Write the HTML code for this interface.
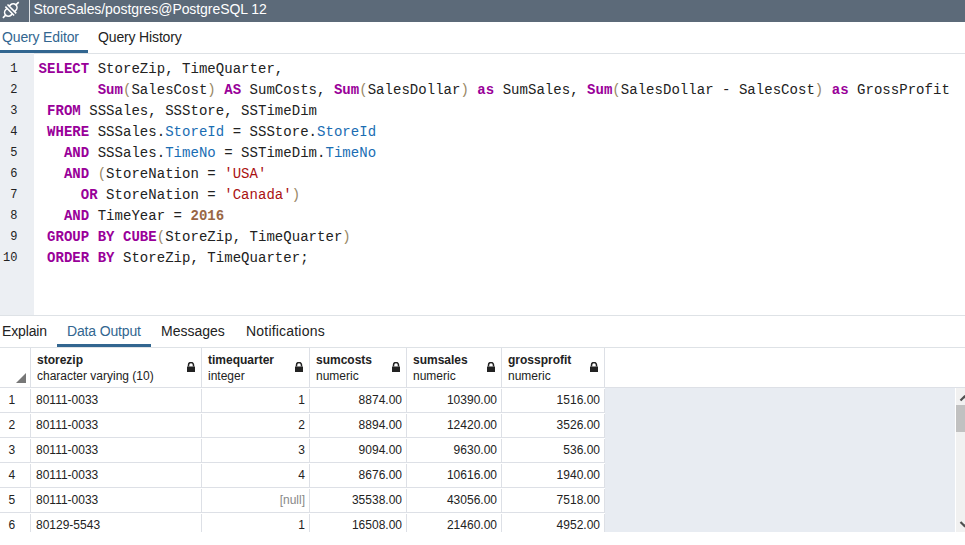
<!DOCTYPE html>
<html><head><meta charset="utf-8">
<style>
*{box-sizing:border-box;margin:0;padding:0}
html,body{width:965px;height:545px;overflow:hidden;background:#fff;font-family:"Liberation Sans",sans-serif;position:relative}
.abs{position:absolute}
#hdr{left:0;top:0;width:965px;height:22px;background:#5c6a79}
#hdr .sep{left:29px;top:0;width:1px;height:22px;background:#dde1e5}
#hdr .title{left:33.5px;top:-1px;height:22px;line-height:21px;font-size:14px;color:#fff;white-space:nowrap;letter-spacing:-0.07px}
.tab{position:absolute;font-size:14px;white-space:nowrap;color:#222;letter-spacing:-0.15px}
.tab.act{color:#326690}
.uline{position:absolute;background:#326690;height:3px}
.hline{position:absolute;height:1px;background:#dee2e6;left:0;width:965px}
#gutter{left:0;top:53px;width:34px;height:262px;background:#eceff3}
.ln{position:absolute;left:0;width:17.5px;text-align:right;font-family:"Liberation Mono",monospace;font-size:12px;color:#222}
.code{position:absolute;left:38.6px;letter-spacing:0.036px;font-family:"Liberation Mono",monospace;font-size:14px;color:#222;white-space:pre}
.k{color:#990099;font-weight:bold}
.p{color:#1a6db3}
.b{color:#998866}
.s{color:#aa1111}
.n{color:#996644;font-weight:bold}
.gh{position:absolute;font-size:12px;white-space:nowrap;color:#222}
.gh b{display:block;font-weight:bold;line-height:16px}
.gh{line-height:16px}
.vl{position:absolute;width:1px;background:#dde0e6}
.cell{position:absolute;font-size:12px;color:#222;white-space:nowrap}
</style></head><body>
<div id="hdr" class="abs">
  <svg class="abs" style="left:0;top:0" width="22" height="22" viewBox="0 0 22 22"><g transform="rotate(45 10.8 10)" stroke="#fff" stroke-width="1.6" fill="none" stroke-linecap="butt"><path d="M7 8.3 V6.6 A3.8 3.8 0 0 1 14.6 6.6 V8.3"/><path d="M7 11.7 V13.4 A3.8 3.8 0 0 0 14.6 13.4 V11.7"/><path d="M4.6 8.5 H17 M4.6 11.5 H17"/><path d="M10.8 2.8 V-1.2 M10.8 17.2 V21.2"/></g></svg>
  <div class="abs sep"></div>
  <div class="abs title">StoreSales/postgres@PostgreSQL 12</div>
</div>

<div class="tab act" style="left:2px;top:29px">Query Editor</div>
<div class="tab" style="left:98px;top:29px">Query History</div>
<div class="uline" style="left:0;top:50px;width:88px"></div>
<div class="hline" style="top:53px;"></div>

<div id="gutter" class="abs"></div>
<div class="ln" style="top:62px">1</div>
<div class="ln" style="top:83px">2</div>
<div class="ln" style="top:104px">3</div>
<div class="ln" style="top:125px">4</div>
<div class="ln" style="top:146px">5</div>
<div class="ln" style="top:167px">6</div>
<div class="ln" style="top:188px">7</div>
<div class="ln" style="top:209px">8</div>
<div class="ln" style="top:230px">9</div>
<div class="ln" style="top:251px">10</div>

<div class="code" style="top:61px"><span class="k">SELECT</span> StoreZip, TimeQuarter,</div>
<div class="code" style="top:82px">       <span class="k">Sum</span><span class="b">(</span>SalesCost<span class="b">)</span> <span class="k">AS</span> SumCosts, <span class="k">Sum</span><span class="b">(</span>SalesDollar<span class="b">)</span> <span class="k">as</span> SumSales, <span class="k">Sum</span><span class="b">(</span>SalesDollar - SalesCost<span class="b">)</span> <span class="k">as</span> GrossProfit</div>
<div class="code" style="top:103px"> <span class="k">FROM</span> SSSales, SSStore, SSTimeDim</div>
<div class="code" style="top:124px"> <span class="k">WHERE</span> SSSales.<span class="p">StoreId</span> = SSStore.<span class="p">StoreId</span></div>
<div class="code" style="top:145px">   <span class="k">AND</span> SSSales.<span class="p">TimeNo</span> = SSTimeDim.<span class="p">TimeNo</span></div>
<div class="code" style="top:166px">   <span class="k">AND</span> <span class="b">(</span>StoreNation = <span class="s">'USA'</span></div>
<div class="code" style="top:187px">     <span class="k">OR</span> StoreNation = <span class="s">'Canada'</span><span class="b">)</span></div>
<div class="code" style="top:208px">   <span class="k">AND</span> TimeYear = <span class="n">2016</span></div>
<div class="code" style="top:229px"> <span class="k">GROUP</span> <span class="k">BY</span> <span class="k">CUBE</span><span class="b">(</span>StoreZip, TimeQuarter<span class="b">)</span></div>
<div class="code" style="top:250px"> <span class="k">ORDER</span> <span class="k">BY</span> StoreZip, TimeQuarter;</div>

<div class="hline" style="top:315px;"></div>
<div class="tab" style="left:2px;top:323px">Explain</div>
<div class="tab act" style="left:67px;top:323px">Data Output</div>
<div class="tab" style="left:161px;top:323px;letter-spacing:0">Messages</div>
<div class="tab" style="left:246px;top:323px;letter-spacing:0.2px">Notifications</div>
<div class="uline" style="left:57px;top:344px;width:94px"></div>
<div class="hline" style="top:347px;"></div>

<div id="grid">
<div class="abs" style="left:0;top:348px;width:965px;height:184px;overflow:hidden">
<div class="abs" style="left:605px;top:40px;width:350px;height:144px;background:#e8ecf2"></div>
<div class="abs" style="left:956px;top:40px;width:9px;height:144px;background:#f1f1f1"></div><div class="abs" style="left:956px;top:57px;width:9px;height:27px;background:#c1c1c1"></div><svg class="abs" style="left:956px;top:40px" width="9" height="144"><path d="M4.5 12.5 L8.5 8.5 L12.5 12.5" stroke="#505050" stroke-width="2.2" fill="none"/><path d="M4.5 134 L8.5 138 L12.5 134" stroke="#505050" stroke-width="2.2" fill="none"/></svg>
<div class="abs" style="left:0;top:39px;width:965px;height:1px;background:#dde0e6"></div>
<svg class="abs" style="left:16px;top:25px" width="10" height="10"><path d="M10 0 L10 10 L0 10 Z" fill="#777"/></svg>
<div class="vl" style="left:30px;top:0;height:39px"></div>
<div class="gh" style="left:37px;top:4px"><b>storezip</b>character varying (10)</div>
<svg class="abs" style="left:187px;top:14px" width="8" height="10" viewBox="0 0 8 10"><path d="M1.5 4.5 V3 A2.5 2.5 0 0 1 6.5 3 V4.5" stroke="#222" stroke-width="1.5" fill="none"/><rect x="0" y="4.5" width="8" height="5.5" fill="#222"/></svg>
<div class="vl" style="left:201px;top:0;height:39px"></div>
<div class="gh" style="left:208px;top:4px"><b>timequarter</b>integer</div>
<svg class="abs" style="left:295px;top:14px" width="8" height="10" viewBox="0 0 8 10"><path d="M1.5 4.5 V3 A2.5 2.5 0 0 1 6.5 3 V4.5" stroke="#222" stroke-width="1.5" fill="none"/><rect x="0" y="4.5" width="8" height="5.5" fill="#222"/></svg>
<div class="vl" style="left:309px;top:0;height:39px"></div>
<div class="gh" style="left:316px;top:4px"><b>sumcosts</b>numeric</div>
<svg class="abs" style="left:392px;top:14px" width="8" height="10" viewBox="0 0 8 10"><path d="M1.5 4.5 V3 A2.5 2.5 0 0 1 6.5 3 V4.5" stroke="#222" stroke-width="1.5" fill="none"/><rect x="0" y="4.5" width="8" height="5.5" fill="#222"/></svg>
<div class="vl" style="left:406px;top:0;height:39px"></div>
<div class="gh" style="left:413px;top:4px"><b>sumsales</b>numeric</div>
<svg class="abs" style="left:487px;top:14px" width="8" height="10" viewBox="0 0 8 10"><path d="M1.5 4.5 V3 A2.5 2.5 0 0 1 6.5 3 V4.5" stroke="#222" stroke-width="1.5" fill="none"/><rect x="0" y="4.5" width="8" height="5.5" fill="#222"/></svg>
<div class="vl" style="left:501px;top:0;height:39px"></div>
<div class="gh" style="left:508px;top:4px"><b>grossprofit</b>numeric</div>
<svg class="abs" style="left:590px;top:14px" width="8" height="10" viewBox="0 0 8 10"><path d="M1.5 4.5 V3 A2.5 2.5 0 0 1 6.5 3 V4.5" stroke="#222" stroke-width="1.5" fill="none"/><rect x="0" y="4.5" width="8" height="5.5" fill="#222"/></svg>
<div class="vl" style="left:604px;top:0;height:39px"></div>
<div class="abs" style="left:0;top:64px;width:605px;height:1px;background:#dde0e6"></div>
<div class="cell" style="left:8.5px;top:45px">1</div>
<div class="cell" style="left:36px;top:45px">80111-0033</div>
<div class="cell" style="right:660px;top:45px;">1</div>
<div class="cell" style="right:563px;top:45px;">8874.00</div>
<div class="cell" style="right:468px;top:45px;">10390.00</div>
<div class="cell" style="right:365px;top:45px;">1516.00</div>
<div class="abs" style="left:0;top:89px;width:605px;height:1px;background:#dde0e6"></div>
<div class="cell" style="left:8.5px;top:70px">2</div>
<div class="cell" style="left:36px;top:70px">80111-0033</div>
<div class="cell" style="right:660px;top:70px;">2</div>
<div class="cell" style="right:563px;top:70px;">8894.00</div>
<div class="cell" style="right:468px;top:70px;">12420.00</div>
<div class="cell" style="right:365px;top:70px;">3526.00</div>
<div class="abs" style="left:0;top:114px;width:605px;height:1px;background:#dde0e6"></div>
<div class="cell" style="left:8.5px;top:95px">3</div>
<div class="cell" style="left:36px;top:95px">80111-0033</div>
<div class="cell" style="right:660px;top:95px;">3</div>
<div class="cell" style="right:563px;top:95px;">9094.00</div>
<div class="cell" style="right:468px;top:95px;">9630.00</div>
<div class="cell" style="right:365px;top:95px;">536.00</div>
<div class="abs" style="left:0;top:139px;width:605px;height:1px;background:#dde0e6"></div>
<div class="cell" style="left:8.5px;top:120px">4</div>
<div class="cell" style="left:36px;top:120px">80111-0033</div>
<div class="cell" style="right:660px;top:120px;">4</div>
<div class="cell" style="right:563px;top:120px;">8676.00</div>
<div class="cell" style="right:468px;top:120px;">10616.00</div>
<div class="cell" style="right:365px;top:120px;">1940.00</div>
<div class="abs" style="left:0;top:164px;width:605px;height:1px;background:#dde0e6"></div>
<div class="cell" style="left:8.5px;top:145px">5</div>
<div class="cell" style="left:36px;top:145px">80111-0033</div>
<div class="cell" style="right:660px;top:145px;color:#888">[null]</div>
<div class="cell" style="right:563px;top:145px;">35538.00</div>
<div class="cell" style="right:468px;top:145px;">43056.00</div>
<div class="cell" style="right:365px;top:145px;">7518.00</div>
<div class="abs" style="left:0;top:189px;width:605px;height:1px;background:#dde0e6"></div>
<div class="cell" style="left:8.5px;top:170px">6</div>
<div class="cell" style="left:36px;top:170px">80129-5543</div>
<div class="cell" style="right:660px;top:170px;">1</div>
<div class="cell" style="right:563px;top:170px;">16508.00</div>
<div class="cell" style="right:468px;top:170px;">21460.00</div>
<div class="cell" style="right:365px;top:170px;">4952.00</div>
<div class="vl" style="left:30px;top:41px;height:23px"></div>
<div class="vl" style="left:201px;top:41px;height:23px"></div>
<div class="vl" style="left:309px;top:41px;height:23px"></div>
<div class="vl" style="left:406px;top:41px;height:23px"></div>
<div class="vl" style="left:501px;top:41px;height:23px"></div>
<div class="vl" style="left:604px;top:41px;height:23px"></div>
<div class="vl" style="left:30px;top:66px;height:23px"></div>
<div class="vl" style="left:201px;top:66px;height:23px"></div>
<div class="vl" style="left:309px;top:66px;height:23px"></div>
<div class="vl" style="left:406px;top:66px;height:23px"></div>
<div class="vl" style="left:501px;top:66px;height:23px"></div>
<div class="vl" style="left:604px;top:66px;height:23px"></div>
<div class="vl" style="left:30px;top:91px;height:23px"></div>
<div class="vl" style="left:201px;top:91px;height:23px"></div>
<div class="vl" style="left:309px;top:91px;height:23px"></div>
<div class="vl" style="left:406px;top:91px;height:23px"></div>
<div class="vl" style="left:501px;top:91px;height:23px"></div>
<div class="vl" style="left:604px;top:91px;height:23px"></div>
<div class="vl" style="left:30px;top:116px;height:23px"></div>
<div class="vl" style="left:201px;top:116px;height:23px"></div>
<div class="vl" style="left:309px;top:116px;height:23px"></div>
<div class="vl" style="left:406px;top:116px;height:23px"></div>
<div class="vl" style="left:501px;top:116px;height:23px"></div>
<div class="vl" style="left:604px;top:116px;height:23px"></div>
<div class="vl" style="left:30px;top:141px;height:23px"></div>
<div class="vl" style="left:201px;top:141px;height:23px"></div>
<div class="vl" style="left:309px;top:141px;height:23px"></div>
<div class="vl" style="left:406px;top:141px;height:23px"></div>
<div class="vl" style="left:501px;top:141px;height:23px"></div>
<div class="vl" style="left:604px;top:141px;height:23px"></div>
<div class="vl" style="left:30px;top:166px;height:23px"></div>
<div class="vl" style="left:201px;top:166px;height:23px"></div>
<div class="vl" style="left:309px;top:166px;height:23px"></div>
<div class="vl" style="left:406px;top:166px;height:23px"></div>
<div class="vl" style="left:501px;top:166px;height:23px"></div>
<div class="vl" style="left:604px;top:166px;height:23px"></div>
</div>
</div>
</body></html>
